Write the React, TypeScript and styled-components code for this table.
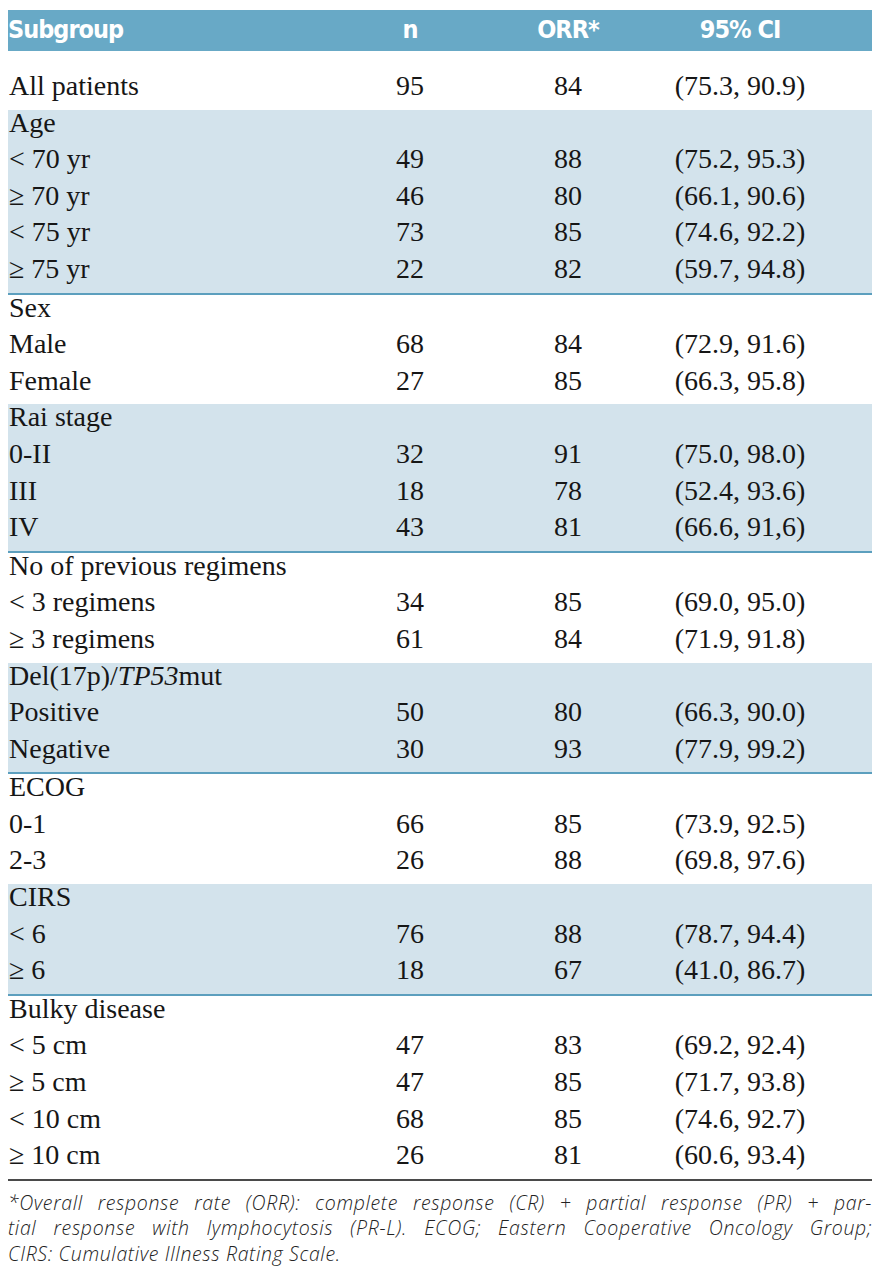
import React from 'react';
import styled, { createGlobalStyle } from 'styled-components';

const GlobalStyle = createGlobalStyle`
	body {
		margin: 0;
		background: #ffffff;
	}
`;

type Row = { label: React.ReactNode; n?: string; orr?: string; ci?: string };
type Group = { shaded: boolean; rows: Row[] };

const groups: Group[] = [
	{ shaded: true, rows: [
		{ label: 'Age' },
		{ label: '< 70 yr', n: '49', orr: '88', ci: '(75.2, 95.3)' },
		{ label: '≥ 70 yr', n: '46', orr: '80', ci: '(66.1, 90.6)' },
		{ label: '< 75 yr', n: '73', orr: '85', ci: '(74.6, 92.2)' },
		{ label: '≥ 75 yr', n: '22', orr: '82', ci: '(59.7, 94.8)' },
	] },
	{ shaded: false, rows: [
		{ label: 'Sex' },
		{ label: 'Male', n: '68', orr: '84', ci: '(72.9, 91.6)' },
		{ label: 'Female', n: '27', orr: '85', ci: '(66.3, 95.8)' },
	] },
	{ shaded: true, rows: [
		{ label: 'Rai stage' },
		{ label: '0-II', n: '32', orr: '91', ci: '(75.0, 98.0)' },
		{ label: 'III', n: '18', orr: '78', ci: '(52.4, 93.6)' },
		{ label: 'IV', n: '43', orr: '81', ci: '(66.6, 91,6)' },
	] },
	{ shaded: false, rows: [
		{ label: 'No of previous regimens' },
		{ label: '< 3 regimens', n: '34', orr: '85', ci: '(69.0, 95.0)' },
		{ label: '≥ 3 regimens', n: '61', orr: '84', ci: '(71.9, 91.8)' },
	] },
	{ shaded: true, rows: [
		{ label: <>Del(17p)/<i>TP53</i>mut</> },
		{ label: 'Positive', n: '50', orr: '80', ci: '(66.3, 90.0)' },
		{ label: 'Negative', n: '30', orr: '93', ci: '(77.9, 99.2)' },
	] },
	{ shaded: false, rows: [
		{ label: 'ECOG' },
		{ label: '0-1', n: '66', orr: '85', ci: '(73.9, 92.5)' },
		{ label: '2-3', n: '26', orr: '88', ci: '(69.8, 97.6)' },
	] },
	{ shaded: true, rows: [
		{ label: 'CIRS' },
		{ label: '< 6', n: '76', orr: '88', ci: '(78.7, 94.4)' },
		{ label: '≥ 6', n: '18', orr: '67', ci: '(41.0, 86.7)' },
	] },
	{ shaded: false, rows: [
		{ label: 'Bulky disease' },
		{ label: '< 5 cm', n: '47', orr: '83', ci: '(69.2, 92.4)' },
		{ label: '≥ 5 cm', n: '47', orr: '85', ci: '(71.7, 93.8)' },
		{ label: '< 10 cm', n: '68', orr: '85', ci: '(74.6, 92.7)' },
		{ label: '≥ 10 cm', n: '26', orr: '81', ci: '(60.6, 93.4)' },
	] },
];

const Page = styled.div`
	width: 864px;
	margin: 10px 14px 0 8px;
	color: #161616;
`;

const HeaderRow = styled.div`
	display: grid;
	grid-template-columns: 342px 120px 196px 148px;
	align-items: center;
	height: 41px;
	padding-right: 58px;
	background: #68a9c6;
	color: #ffffff;
	font-family: 'Liberation Sans Narrow', 'DejaVu Sans Condensed', 'DejaVu Sans', sans-serif;
	font-stretch: condensed;
	font-weight: bold;
	font-size: 25px;
	letter-spacing: -1px;
`;

const HeadCell = styled.div<{ $left?: boolean }>`
	text-align: ${(p) => (p.$left ? 'left' : 'center')};
	padding-bottom: 3px;
`;

const Body = styled.div`
	font-family: 'Liberation Serif', 'Times New Roman', serif;
	font-size: 28px;
	margin-top: 22px;
	border-bottom: 2px solid #4a4a4a;
`;

const GroupBlock = styled.div<{ $shaded: boolean }>`
	background: ${(p) => (p.$shaded ? '#d3e3ec' : 'transparent')};
	border-bottom: ${(p) => (p.$shaded ? '2px solid #5c9fbe' : 'none')};
`;

const DataRow = styled.div`
	display: grid;
	grid-template-columns: 342px 120px 196px 148px;
	height: 36.6px;
	line-height: 25px;
	padding-right: 58px;
	box-sizing: border-box;
	white-space: nowrap;
`;

const Cell = styled.div<{ $left?: boolean }>`
	text-align: ${(p) => (p.$left ? 'left' : 'center')};
	padding-left: ${(p) => (p.$left ? '1px' : '0')};
`;

const Footnote = styled.div`
	margin-top: 9px;
	font-family: 'Open Sans', 'DejaVu Sans', sans-serif;
	font-style: italic;
	font-weight: 300;
	font-size: 19.5px;
	letter-spacing: 0.65px;
	line-height: 25.5px;
	color: #222;
`;

const NoteLine = styled.div<{ $last?: boolean }>`
	text-align: ${(p) => (p.$last ? 'left' : 'justify')};
	text-align-last: ${(p) => (p.$last ? 'left' : 'justify')};
	white-space: nowrap;
`;

const TableRow: React.FC<{ row: Row }> = ({ row }) => (
	<DataRow>
		<Cell $left>{row.label}</Cell>
		<Cell>{row.n}</Cell>
		<Cell>{row.orr}</Cell>
		<Cell>{row.ci}</Cell>
	</DataRow>
);

export default function App() {
	return (
		<>
			<GlobalStyle />
			<Page>
				<HeaderRow>
					<HeadCell $left>Subgroup</HeadCell>
					<HeadCell>n</HeadCell>
					<HeadCell>ORR*</HeadCell>
					<HeadCell>95% CI</HeadCell>
				</HeaderRow>
				<Body>
					<TableRow row={{ label: 'All patients', n: '95', orr: '84', ci: '(75.3, 90.9)' }} />
					{groups.map((g, i) => (
						<GroupBlock key={i} $shaded={g.shaded}>
							{g.rows.map((r, j) => (
								<TableRow key={j} row={r} />
							))}
						</GroupBlock>
					))}
				</Body>
				<Footnote>
					<NoteLine>*Overall response rate (ORR): complete response (CR) + partial response (PR) + par-</NoteLine>
					<NoteLine>tial response with lymphocytosis (PR-L). ECOG; Eastern Cooperative Oncology Group;</NoteLine>
					<NoteLine $last>CIRS: Cumulative Illness Rating Scale.</NoteLine>
				</Footnote>
			</Page>
		</>
	);
}
